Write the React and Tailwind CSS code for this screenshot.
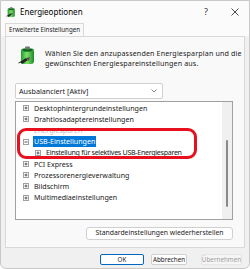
import React from "react";

const font = { fontFamily: '"Noto Sans", "Open Sans", sans-serif' };

function Plus({ minus }) {
  return (
    <span className="inline-flex items-center justify-center w-[6px] h-[6px] border border-[#a0a0a0] bg-white shrink-0">
      <svg width="4" height="4" viewBox="0 0 4 4">
        <line x1="0.5" y1="2" x2="3.5" y2="2" stroke="#555" strokeWidth="1" />
        {!minus && <line x1="2" y1="0.5" x2="2" y2="3.5" stroke="#555" strokeWidth="1" />}
      </svg>
    </span>
  );
}

function BatteryIcon({ size = 20 }) {
  return (
    <svg width={size} height={size} viewBox="0 0 20 20">
      <defs>
        <linearGradient id="bg1" x1="0" x2="1" y1="0" y2="0">
          <stop offset="0" stopColor="#1f9a2e" />
          <stop offset="0.45" stopColor="#7fe06a" />
          <stop offset="1" stopColor="#1d8a26" />
        </linearGradient>
      </defs>
      <rect x="3" y="3" width="13" height="15" rx="3" fill="url(#bg1)" />
      <ellipse cx="9.5" cy="4" rx="6.5" ry="2" fill="#2aa53b" />
      <ellipse cx="9.5" cy="4" rx="5" ry="1.3" fill="#155f1c" />
      <rect x="7" y="0.5" width="5" height="3" rx="1" fill="#6c7a6c" />
      <path d="M2 16 L8 12 L10 14 L4 18 Z" fill="#222" />
      <path d="M8 12 L12 11 L11 15 L10 14 Z" fill="#555" />
      <path d="M0.5 17 L3 16" stroke="#333" strokeWidth="1" />
    </svg>
  );
}

function Row({ children, level = 0, minus, selected, faded, noBox, tight }) {
  return (
    <div className={`flex items-center h-[11.2px] ${level ? "pl-[19px]" : "pl-[7px]"}`}>
      {noBox ? <span className="w-[6px]" /> : <Plus minus={minus} />}
      <span
        className={`ml-[4px] px-[1px] leading-[11px] whitespace-nowrap ${tight ? "tracking-[-0.3px]" : ""} ${
          selected ? "bg-[#0078d7] text-white" : faded ? "text-[#c0c0c0]" : "text-[#1a1a1a]"
        }`}
      >
        {children}
      </span>
    </div>
  );
}

export default function App() {
  return (
    <div className="w-[250px] h-[269px] bg-white" style={font}>
      <div className="w-[250px] h-[269px] bg-[#f0f0f0] border border-[#c8c8c8] rounded-b-[6px] flex flex-col">
        {/* title bar */}
        <div className="h-[22px] bg-[#fbfbfb] flex items-center pl-[5px] shrink-0">
          <BatteryIcon size={11} />
          <span className="ml-[3px] text-[8px] text-black">Energieoptionen</span>
          <span className="ml-auto text-[9px] text-[#333] mr-[23px]">?</span>
          <svg width="8" height="8" viewBox="0 0 8 8" className="mr-[10px]">
            <path d="M0.5 0.5 L7.5 7.5 M7.5 0.5 L0.5 7.5" stroke="#333" strokeWidth="0.9" />
          </svg>
        </div>
        {/* tab header */}
        <div className="pl-[4px] h-[13px] flex items-end bg-[#fbfbfb] shrink-0">
          <div className="h-[13px] px-[3px] bg-[#f9f9f9] border-t border-l border-r border-[#d9d9d9] text-[6.2px] text-[#222] flex items-center whitespace-nowrap">
            Erweiterte Einstellungen
          </div>
        </div>
        {/* tab panel */}
        <div className="mx-[4px] h-[212px] bg-[#f9f9f9] border border-[#d9d9d9] flex flex-col shrink-0">
          <div className="flex pt-[9px] pl-[12px]">
            <BatteryIcon size={20} />
            <div className="ml-[7px] text-[7.1px] leading-[10px] text-[#1a1a1a] pt-[2px] whitespace-nowrap tracking-[0.15px]">
              <div>Wählen Sie den anzupassenden Energiesparplan und die</div>
              <div>gewünschten Energiespareinstellungen aus.</div>
            </div>
          </div>
          {/* dropdown */}
          <div className="mt-[15px] ml-[9px] w-[148px] h-[16px] bg-white border border-[#d0d0d0] rounded-[2px] flex items-center pl-[3px] pr-[5px]">
            <span className="text-[7.2px] text-[#1a1a1a]">Ausbalanciert [Aktiv]</span>
            <svg width="6" height="4" viewBox="0 0 6 4" className="ml-auto">
              <path d="M0.5 0.5 L3 3 L5.5 0.5" stroke="#666" strokeWidth="0.8" fill="none" />
            </svg>
          </div>
          {/* tree */}
          <div className="relative mt-[2px] ml-[9px] w-[218px] h-[119px] bg-white border border-[#a0a0a0] flex text-[7.1px]">
            <div className="flex-1 pt-[0.5px]">
              <Row>Desktophintergrundeinstellungen</Row>
              <Row>Drahtlosadaptereinstellungen</Row>
              <Row faded noBox>Energiesparen</Row>
              <Row minus selected>USB-Einstellungen</Row>
              <Row level={1} tight>Einstellung für selektives USB-Energiesparen</Row>
              <Row>PCI Express</Row>
              <Row>Prozessorenergieverwaltung</Row>
              <Row>Bildschirm</Row>
              <Row>Multimediaeinstellungen</Row>
            </div>
            <div className="w-[10px] bg-[#f0f0f0] flex justify-center pt-[38px] pb-[12px]">
              <div className="w-[1.5px] h-full bg-[#8a8a8a] rounded-full" />
            </div>
            {/* red annotation ring */}
            <div className="absolute left-[1px] top-[26px] w-[180px] h-[31px] border-[3px] border-[#e8101e] rounded-[9px]" />
          </div>
          {/* restore button */}
          <div className="mt-[7px] ml-auto mr-[11px] w-[147px] h-[13px] bg-white border border-[#d0d0d0] rounded-[3px] flex items-center justify-center text-[6.8px] text-[#1a1a1a] whitespace-nowrap">
            Standardeinstellungen wiederherstellen
          </div>
        </div>
        {/* bottom buttons */}
        <div className="flex mt-[6px] pl-[99px]">
          <div className="w-[44px] h-[11px] bg-white border border-[#0067c0] rounded-[2px] text-[6.3px] flex items-center justify-center text-[#1a1a1a]">OK</div>
          <div className="ml-[7px] w-[36px] h-[11px] bg-white border border-[#d0d0d0] rounded-[2px] text-[6.3px] flex items-center justify-center text-[#1a1a1a]">Abbrechen</div>
          <div className="ml-[14px] w-[41px] h-[11px] bg-[#f5f5f5] border border-[#e6e6e6] rounded-[2px] text-[6.3px] flex items-center justify-center text-[#a0a0a0]">Übernehmen</div>
        </div>
      </div>
    </div>
  );
}
